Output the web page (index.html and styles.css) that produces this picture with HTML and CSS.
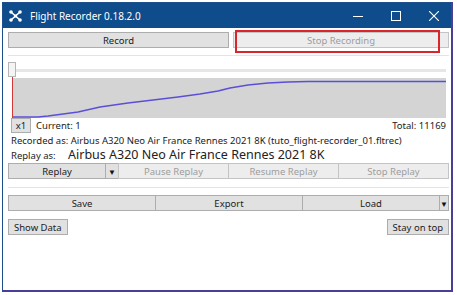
FILE: index.html
```html
<!DOCTYPE html>
<html lang="en">
<head>
  <meta charset="UTF-8" />
  <title>Flight Recorder 0.18.2.0</title>
  <link rel="stylesheet" href="styles.css">
</head>
<body>
  <div class="window">
    <!-- Title bar -->
    <div class="titlebar">
      <svg class="app-icon" width="13" height="12" viewBox="0 0 13 12">
        <path d="M2 2 L11 10 M11 2 L2 10" stroke="#fff" stroke-width="1.6"/>
        <circle cx="2" cy="2" r="1.8" fill="#fff"/>
        <circle cx="11" cy="2" r="1.8" fill="#fff"/>
        <circle cx="2" cy="10" r="1.8" fill="#fff"/>
        <circle cx="11" cy="10" r="1.8" fill="#fff"/>
        <rect x="5" y="4.5" width="3" height="3" fill="#fff"/>
      </svg>
      <span class="title">Flight Recorder 0.18.2.0</span>
      <div class="controls">
        <svg width="10" height="10" viewBox="0 0 10 10"><path d="M0 5.5 H10" stroke="#fff" stroke-width="1"/></svg>
        <svg width="10" height="10" viewBox="0 0 10 10"><rect x="0.5" y="0.5" width="9" height="9" fill="none" stroke="#fff" stroke-width="1"/></svg>
        <svg width="10" height="10" viewBox="0 0 10 10"><path d="M0 0 L10 10 M10 0 L0 10" stroke="#fff" stroke-width="1.1"/></svg>
      </div>
    </div>

    <div class="content">
      <div class="row">
        <button class="btn record">Record</button>
        <div class="highlight-wrap grow">
          <button class="btn disabled full">Stop Recording</button>
        </div>
      </div>

      <div class="sep"></div>

      <!-- Slider and chart -->
      <svg class="chart" width="438" height="56" viewBox="0 0 438 56">
        <rect x="0" y="7" width="438" height="3" fill="#e6e6e6"/>
        <rect x="4" y="16" width="434" height="40" fill="#d4d4d4"/>
        <polyline fill="none" stroke="#5a4fd8" stroke-width="1.3"
          points="4,55 30,55 40,54 55,52 70,50 92,45 120,41 145,38 170,35 192,32 210,29 222,26 240,23 260,21 280,20 300,19.5 438,19.5"/>
        <line x1="4.5" y1="14" x2="4.5" y2="56" stroke="#d23a3a" stroke-width="1"/>
        <rect x="0.5" y="0.5" width="7" height="14" fill="#f4f4f4" stroke="#b5b5b5"/>
      </svg>

      <div class="info">
        <span class="zoom-box">x1</span>
        <span class="current">Current: 1</span>
        <span class="total">Total: 11169</span>
      </div>

      <div class="recorded">Recorded as: Airbus A320 Neo Air France Rennes 2021 8K (tuto_flight-recorder_01.fltrec)</div>
      <div class="replay-as">
        <span class="label">Replay as:</span>
        <span class="aircraft">Airbus A320 Neo Air France Rennes 2021 8K</span>
      </div>

      <div class="row">
        <button class="btn w97">Replay</button>
        <button class="btn arrow">&#9660;</button>
        <button class="btn grow disabled">Pause Replay</button>
        <button class="btn grow disabled">Resume Replay</button>
        <button class="btn grow disabled">Stop Replay</button>
      </div>

      <div class="sep sep2"></div>

      <div class="row">
        <button class="btn grow">Save</button>
        <button class="btn grow">Export</button>
        <button class="btn load">Load</button>
        <button class="btn arrow small">&#9660;</button>
      </div>

      <div class="row bottom">
        <button class="btn">Show Data</button>
        <button class="btn">Stay on top</button>
      </div>
    </div>
  </div>
</body>
</html>
```

FILE: styles.css
```css
body {
  margin: 0;
  padding: 0;
  background-color: #fff;
  font-family: "Noto Sans", "Open Sans", sans-serif;
  font-size: 9.5px;
  color: #222;
}

.window {
  margin: 2px 0 0 2px;
  width: 448px;
  height: 287px;
  border: 1px solid #1d4f8c;
  border-bottom: 2px solid #4a3f98;
  border-right: 2px solid #4a3f98;
  background: #fff;
  display: flex;
  flex-direction: column;
}

.titlebar {
  height: 25px;
  background-color: #0f4c8b;
  color: #fff;
  display: flex;
  align-items: center;
  padding-left: 6px;
}

.app-icon {
  margin-right: 8px;
}

.title {
  font-size: 10px;
}

.controls {
  margin-left: auto;
  display: flex;
  gap: 28px;
  padding-right: 12px;
}

.content {
  padding: 4px 2px 0 5px;
  display: flex;
  flex-direction: column;
}

.row {
  display: flex;
  height: 16px;
}

.btn {
  font-family: inherit;
  font-size: 9.5px;
  height: 16px;
  padding: 0 5px;
  background-color: #e1e1e1;
  border: 1px solid #adadad;
  color: #222;
  line-height: 13px;
  cursor: pointer;
}

.grow {
  flex: 1;
}

.full {
  width: 100%;
}

.record {
  width: 221px;
}

.row .btn + .btn {
  margin-left: -1px;
}

.disabled {
  color: #9d9d9d;
  background-color: #ededed;
  border-color: #c4c4c4;
}

/* red annotation box drawn over the Stop Recording button */
.highlight-wrap {
  position: relative;
  margin-left: 4px;
  display: flex;
}

.highlight-wrap::after {
  content: "";
  position: absolute;
  top: -2px;
  left: 2px;
  right: 9px;
  bottom: -5px;
  border: 2px solid #d9262c;
  pointer-events: none;
}

.sep {
  height: 1px;
  background: #e4e4e4;
  margin: 7px 0 6px;
}

.sep2 {
  margin: 8px 0 7px;
}

.chart {
  display: block;
}

.info {
  display: flex;
  align-items: center;
  height: 15px;
  margin-left: 3px;
  padding-right: 3px;
}

.zoom-box {
  height: 13px;
  width: 18px;
  border: 1px solid #adadad;
  background: #e1e1e1;
  text-align: center;
  line-height: 13px;
  margin-right: 5px;
}

.total {
  margin-left: auto;
}

.recorded {
  margin: 1px 0 0 3px;
  height: 13px;
  line-height: 13px;
}

.replay-as {
  margin-left: 3px;
  height: 16px;
  display: flex;
  align-items: baseline;
  line-height: 16px;
}

.replay-as .label {
  width: 57px;
}

.aircraft {
  font-size: 12.5px;
  line-height: 16px;
}

.w97 {
  width: 98px;
}

.arrow {
  width: 14px;
  padding: 0;
  font-size: 8px;
  color: #111;
}

.arrow.small {
  width: 10px;
}

.load {
  width: 138px;
}

.bottom {
  margin-top: 8px;
  justify-content: space-between;
}
```
